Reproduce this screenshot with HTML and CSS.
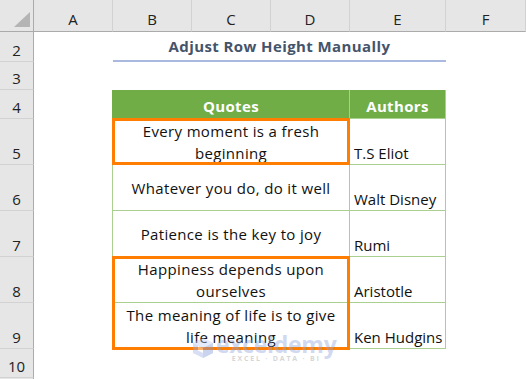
FILE: index.html
```html
<!DOCTYPE html>
<html>
<head>
<meta charset="utf-8">
<link rel="stylesheet" href="styles.css">
</head>
<body>
<div class="sheet">
  <div class="corner"><span class="tri"></span></div>
  <div class="ch">A</div><div class="ch">B</div><div class="ch">C</div><div class="ch">D</div><div class="ch">E</div><div class="ch">F</div>

  <div class="rh">2</div><div class="c"></div><div class="title">Adjust Row Height Manually</div><div class="c"></div>

  <div class="rh">3</div><div class="c"></div><div class="c"></div><div class="c"></div><div class="c"></div><div class="c"></div><div class="c"></div>

  <div class="rh">4</div><div class="c eah"></div><div class="th q">Quotes</div><div class="th au">Authors</div><div class="c"></div>

  <div class="rh">5</div><div class="c ea"></div><div class="quote">Every moment is a fresh<br>beginning</div><div class="author">T.S Eliot</div><div class="c"></div>

  <div class="rh">6</div><div class="c ea"></div><div class="quote">Whatever you do, do it well</div><div class="author">Walt Disney</div><div class="c"></div>

  <div class="rh">7</div><div class="c ea"></div><div class="quote">Patience is the key to joy</div><div class="author">Rumi</div><div class="c"></div>

  <div class="rh">8</div><div class="c ea"></div><div class="quote">Happiness depends upon<br>ourselves</div><div class="author">Aristotle</div><div class="c"></div>

  <div class="rh">9</div><div class="c ea"></div><div class="quote">The meaning of life is to give<br>life meaning</div><div class="author">Ken Hudgins</div><div class="c"></div>

  <div class="rh">10</div><div class="c"></div><div class="c"></div><div class="c"></div><div class="c"></div><div class="c"></div><div class="c"></div>

  <div class="rh"></div><div class="c"></div><div class="c"></div><div class="c"></div><div class="c"></div><div class="c"></div><div class="c"></div>

  <div class="hl hl-one"></div>
  <div class="hl hl-two"></div>

  <div class="wm">
    <svg class="wm-icon" width="24" height="22" viewBox="0 0 24 22">
      <polygon points="12,1 22,6 22,16 12,21 2,16 2,6" fill="#9fb1e6"/>
      <polygon points="12,1 22,6 12,11 2,6" fill="#c3cff2"/>
      <polygon points="12,11 22,6 22,16 12,21" fill="#8096d8"/>
      <polygon points="7,9 12,11.5 12,16 7,13.5" fill="#ffffff"/>
    </svg>
    <div class="wm-text">
      <span class="wm-name">exceldemy</span>
      <span class="wm-tag">EXCEL · DATA · BI</span>
    </div>
  </div>
</div>
</body>
</html>
```

FILE: styles.css
```css
* { box-sizing: border-box; }

body {
  margin: 0;
  width: 526px;
  height: 379px;
  overflow: hidden;
  background: #ffffff;
  font-family: "Open Sans", "Noto Sans", sans-serif;
  font-size: 15px;
  letter-spacing: 0.35px;
  color: #111111;
}

.sheet {
  position: relative;
  display: grid;
  grid-template-columns: 34px 79px 79px 79px 79px 96px 80px;
  grid-template-rows: 32px 30px 28px 29px 46px 46px 46px 46px 46px 29px 29px;
  height: 379px;
  overflow: hidden;
}

.corner {
  background: #e6e6e6;
  border-right: 1px solid #ababab;
  border-bottom: 1px solid #ababab;
  display: flex;
  justify-content: flex-end;
  align-items: flex-end;
  padding: 0 3px 4px 0;
}

.tri {
  width: 16px;
  height: 15px;
  background: #b4b4b4;
  clip-path: polygon(100% 0, 100% 100%, 0 100%);
}

.ch {
  background: #e6e6e6;
  border-right: 1px solid #d2d2d2;
  border-bottom: 1px solid #ababab;
  display: flex;
  justify-content: center;
  align-items: flex-end;
  line-height: 18px;
  padding-bottom: 3px;
  color: #222222;
  letter-spacing: 0;
}

.rh {
  background: #e6e6e6;
  border-right: 1px solid #ababab;
  border-bottom: 1px solid #d2d2d2;
  display: flex;
  justify-content: center;
  align-items: flex-end;
  line-height: 18px;
  padding-bottom: 2px;
  color: #222222;
  letter-spacing: 0;
}

.title {
  grid-column: span 4;
  border-bottom: 2px solid #a9b9df;
  display: flex;
  justify-content: center;
  align-items: flex-end;
  line-height: 18px;
  padding-bottom: 5px;
  font-weight: bold;
  color: #44546a;
  letter-spacing: 0.4px;
}

.eah { border-right: 1px solid #70ad47; }
.ea { border-right: 1px solid #a9d08e; }

.th {
  background: #70ad47;
  color: #ffffff;
  font-weight: bold;
  display: flex;
  justify-content: center;
  align-items: flex-end;
  line-height: 18px;
  padding-bottom: 3px;
  border-bottom: 1px solid #a9d08e;
}

.th.q {
  grid-column: span 3;
  border-right: 1px solid #a9d08e;
}

.th.au { border-right: 1px solid #a9d08e; }

.quote {
  grid-column: span 3;
  border-right: 1px solid #a9d08e;
  border-bottom: 1px solid #a9d08e;
  display: flex;
  align-items: center;
  justify-content: center;
  text-align: center;
  line-height: 22px;
}

.author {
  border-right: 1px solid #a9d08e;
  border-bottom: 1px solid #a9d08e;
  display: flex;
  align-items: flex-end;
  padding: 0 0 2px 4px;
  line-height: 18px;
  white-space: nowrap;
  letter-spacing: 0;
  overflow: hidden;
}

.hl {
  position: absolute;
  left: 112px;
  width: 238px;
  border: 3px solid #ff7d00;
}

.hl-one { top: 118px; height: 47px; }
.hl-two { top: 256px; height: 94px; }

.wm {
  position: absolute;
  left: 191px;
  top: 334px;
  display: flex;
  align-items: flex-start;
  gap: 1px;
  opacity: 0.4;
  letter-spacing: 0;
}

.wm-icon { margin-top: 3px; }

.wm-text {
  display: flex;
  flex-direction: column;
  align-items: center;
}

.wm-name {
  font-family: "Open Sans", sans-serif;
  font-weight: bold;
  font-size: 23px;
  line-height: 20px;
  color: #8fa3dd;
  letter-spacing: -0.3px;
}

.wm-tag {
  font-family: "Open Sans", sans-serif;
  font-weight: bold;
  font-size: 7px;
  line-height: 9px;
  letter-spacing: 1.8px;
  color: #9a9a9a;
}
```
